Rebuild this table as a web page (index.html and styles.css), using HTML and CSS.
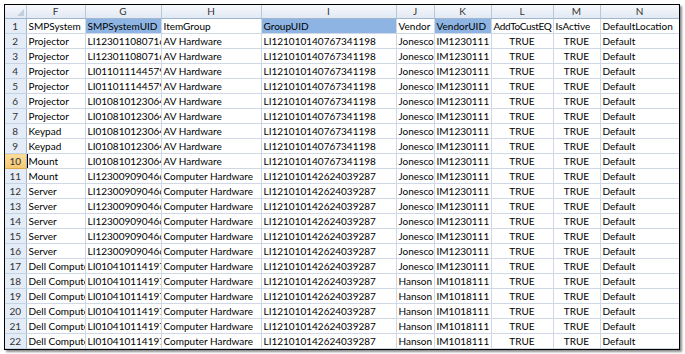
FILE: index.html
```html
<!DOCTYPE html>
<html lang="en">

<head>
    <meta charset="UTF-8">
    <title>SMPSystem - Sheet</title>
    <link rel="stylesheet" href="styles.css">
</head>

<body>
    <div class="frame">
        <table class="sheet">
            <colgroup>
                <col class="c-hdr">
                <col class="c-f">
                <col class="c-g">
                <col class="c-h">
                <col class="c-i">
                <col class="c-j">
                <col class="c-k">
                <col class="c-l">
                <col class="c-m">
                <col class="c-n">
            </colgroup>
            <thead>
                <tr>
                    <th class="corner"><span class="tri"></span></th>
                    <th>F</th><th>G</th><th>H</th><th>I</th><th>J</th><th>K</th><th>L</th><th>M</th><th>N</th>
                </tr>
            </thead>
            <tbody>
                <tr><th>1</th><td>SMPSystem</td><td class="pick">SMPSystemUID</td><td>ItemGroup</td><td class="pick">GroupUID</td><td>Vendor</td><td class="pick">VendorUID</td><td class="tight">AddToCustEQ</td><td>IsActive</td><td>DefaultLocation</td></tr>
                <tr><th>2</th><td>Projector</td><td>LI12301108071645</td><td>AV Hardware</td><td>LI121010140767341198</td><td>Jonesco</td><td>IM1230111</td><td class="mid">TRUE</td><td class="mid">TRUE</td><td>Default</td></tr>
                <tr><th>3</th><td>Projector</td><td>LI12301108071645</td><td>AV Hardware</td><td>LI121010140767341198</td><td>Jonesco</td><td>IM1230111</td><td class="mid">TRUE</td><td class="mid">TRUE</td><td>Default</td></tr>
                <tr><th>4</th><td>Projector</td><td>LI01101114457912</td><td>AV Hardware</td><td>LI121010140767341198</td><td>Jonesco</td><td>IM1230111</td><td class="mid">TRUE</td><td class="mid">TRUE</td><td>Default</td></tr>
                <tr><th>5</th><td>Projector</td><td>LI01101114457912</td><td>AV Hardware</td><td>LI121010140767341198</td><td>Jonesco</td><td>IM1230111</td><td class="mid">TRUE</td><td class="mid">TRUE</td><td>Default</td></tr>
                <tr><th>6</th><td>Projector</td><td>LI01081012306412</td><td>AV Hardware</td><td>LI121010140767341198</td><td>Jonesco</td><td>IM1230111</td><td class="mid">TRUE</td><td class="mid">TRUE</td><td>Default</td></tr>
                <tr><th>7</th><td>Projector</td><td>LI01081012306412</td><td>AV Hardware</td><td>LI121010140767341198</td><td>Jonesco</td><td>IM1230111</td><td class="mid">TRUE</td><td class="mid">TRUE</td><td>Default</td></tr>
                <tr><th>8</th><td>Keypad</td><td>LI01081012306412</td><td>AV Hardware</td><td>LI121010140767341198</td><td>Jonesco</td><td>IM1230111</td><td class="mid">TRUE</td><td class="mid">TRUE</td><td>Default</td></tr>
                <tr><th>9</th><td>Keypad</td><td>LI01081012306412</td><td>AV Hardware</td><td>LI121010140767341198</td><td>Jonesco</td><td>IM1230111</td><td class="mid">TRUE</td><td class="mid">TRUE</td><td>Default</td></tr>
                <tr class="active"><th>10</th><td>Mount</td><td>LI01081012306412</td><td>AV Hardware</td><td>LI121010140767341198</td><td>Jonesco</td><td>IM1230111</td><td class="mid">TRUE</td><td class="mid">TRUE</td><td>Default</td></tr>
                <tr><th>11</th><td>Mount</td><td>LI12300909046612</td><td>Computer Hardware</td><td>LI121010142624039287</td><td>Jonesco</td><td>IM1230111</td><td class="mid">TRUE</td><td class="mid">TRUE</td><td>Default</td></tr>
                <tr><th>12</th><td>Server</td><td>LI12300909046612</td><td>Computer Hardware</td><td>LI121010142624039287</td><td>Jonesco</td><td>IM1230111</td><td class="mid">TRUE</td><td class="mid">TRUE</td><td>Default</td></tr>
                <tr><th>13</th><td>Server</td><td>LI12300909046612</td><td>Computer Hardware</td><td>LI121010142624039287</td><td>Jonesco</td><td>IM1230111</td><td class="mid">TRUE</td><td class="mid">TRUE</td><td>Default</td></tr>
                <tr><th>14</th><td>Server</td><td>LI12300909046612</td><td>Computer Hardware</td><td>LI121010142624039287</td><td>Jonesco</td><td>IM1230111</td><td class="mid">TRUE</td><td class="mid">TRUE</td><td>Default</td></tr>
                <tr><th>15</th><td>Server</td><td>LI12300909046612</td><td>Computer Hardware</td><td>LI121010142624039287</td><td>Jonesco</td><td>IM1230111</td><td class="mid">TRUE</td><td class="mid">TRUE</td><td>Default</td></tr>
                <tr><th>16</th><td>Server</td><td>LI12300909046612</td><td>Computer Hardware</td><td>LI121010142624039287</td><td>Jonesco</td><td>IM1230111</td><td class="mid">TRUE</td><td class="mid">TRUE</td><td>Default</td></tr>
                <tr><th>17</th><td>Dell Computer</td><td>LI01041011419712</td><td>Computer Hardware</td><td>LI121010142624039287</td><td>Jonesco</td><td>IM1230111</td><td class="mid">TRUE</td><td class="mid">TRUE</td><td>Default</td></tr>
                <tr><th>18</th><td>Dell Computer</td><td>LI01041011419712</td><td>Computer Hardware</td><td>LI121010142624039287</td><td>Hanson</td><td>IM1018111</td><td class="mid">TRUE</td><td class="mid">TRUE</td><td>Default</td></tr>
                <tr><th>19</th><td>Dell Computer</td><td>LI01041011419712</td><td>Computer Hardware</td><td>LI121010142624039287</td><td>Hanson</td><td>IM1018111</td><td class="mid">TRUE</td><td class="mid">TRUE</td><td>Default</td></tr>
                <tr><th>20</th><td>Dell Computer</td><td>LI01041011419712</td><td>Computer Hardware</td><td>LI121010142624039287</td><td>Hanson</td><td>IM1018111</td><td class="mid">TRUE</td><td class="mid">TRUE</td><td>Default</td></tr>
                <tr><th>21</th><td>Dell Computer</td><td>LI01041011419712</td><td>Computer Hardware</td><td>LI121010142624039287</td><td>Hanson</td><td>IM1018111</td><td class="mid">TRUE</td><td class="mid">TRUE</td><td>Default</td></tr>
                <tr><th>22</th><td>Dell Computer</td><td>LI01041011419712</td><td>Computer Hardware</td><td>LI121010142624039287</td><td>Hanson</td><td>IM1018111</td><td class="mid">TRUE</td><td class="mid">TRUE</td><td>Default</td></tr>
            </tbody>
        </table>
    </div>
</body>

</html>
```

FILE: styles.css
```css
body {
    margin: 0;
    padding: 4px;
    background-color: #ffffff;
    font-family: 'Lato', 'Open Sans', sans-serif;
    font-size: 10px;
    color: #000000;
}

.frame {
    width: 674px;
    border: 1px solid #000000;
    box-shadow: 2px 2px 2px rgba(0, 0, 0, 0.45);
    overflow: hidden;
}

.sheet {
    table-layout: fixed;
    border-collapse: collapse;
    width: 674px;
}

.c-hdr { width: 21px; }
.c-f { width: 59px; }
.c-g { width: 76px; }
.c-h { width: 100px; }
.c-i { width: 135px; }
.c-j { width: 38px; }
.c-k { width: 57px; }
.c-l { width: 62px; }
.c-m { width: 47px; }
.c-n { width: 79px; }

.sheet td,
.sheet th {
    padding: 0 0 0 2px;
    height: 14px;
    line-height: 14px;
    white-space: nowrap;
    overflow: hidden;
    text-overflow: clip;
    border: 1px solid #d0d7e5;
    border-top: none;
    border-left: none;
    text-align: left;
    vertical-align: bottom;
    font-weight: normal;
}

.sheet thead th {
    height: 13px;
    line-height: 13px;
    text-align: center;
    padding: 0;
    color: #333333;
    background: linear-gradient(#f6f8fc, #e2e9f3);
    border-right: 1px solid #b9c9da;
    border-bottom: 1px solid #9eb6ce;
}

.sheet tbody th {
    text-align: center;
    padding: 0;
    color: #333333;
    background-color: #e4ecf7;
    border-right: 1px solid #9eb6ce;
    border-bottom: 1px solid #c5d3e3;
}

.sheet tbody tr.active th {
    background: linear-gradient(#fbdd9d, #f6c86f);
    border-bottom-color: #d9a94f;
}

.sheet tbody tr.active td:nth-of-type(1) {
    box-shadow: inset 1px 0 0 #000000;
}

.corner {
    position: relative;
}

.tri {
    position: absolute;
    right: 2px;
    bottom: 2px;
    width: 0;
    height: 0;
    border-left: 7px solid transparent;
    border-bottom: 7px solid #c3cfdd;
}

.pick {
    background-color: #8db4e2;
}

.tight {
    letter-spacing: -0.35px;
}

.mid {
    text-align: center !important;
    padding: 0 !important;
}
```
